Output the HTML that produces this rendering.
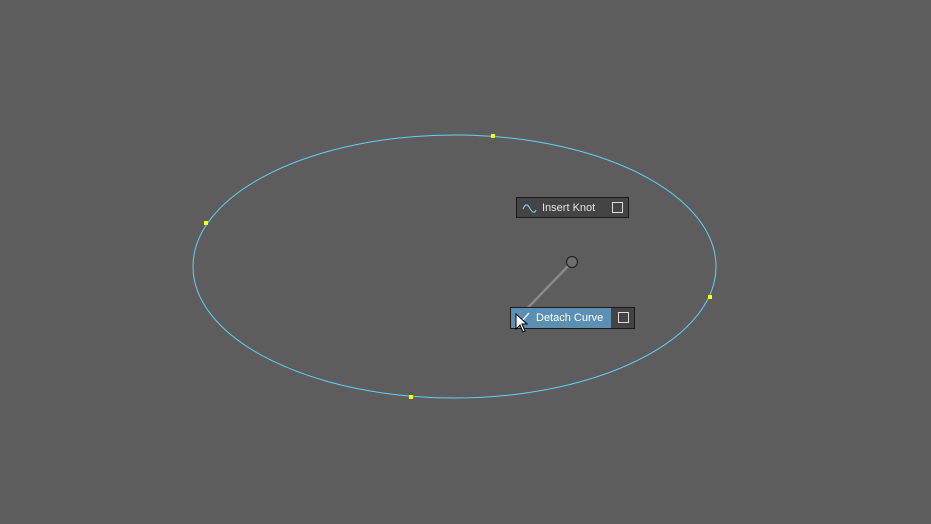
<!DOCTYPE html><html><head><style>
body{margin:0;width:931px;height:524px;background:#5d5d5d;overflow:hidden;position:relative;font-family:"Liberation Sans",sans-serif}
.box{position:absolute;border:1px solid #1a1a1a;background:#444;color:#e6e6e6;font-size:11px;box-sizing:border-box}
.cb{position:absolute;width:9px;height:9px;border:1px solid #ddd}
</style></head><body>
<svg width="931" height="524" style="position:absolute;left:0;top:0">
<ellipse cx="454.5" cy="266.5" rx="261.5" ry="131.5" fill="none" stroke="#5fd3f0" stroke-width="1"/>
<g fill="#ffff00"><rect x="491" y="134" width="4" height="4"/><rect x="204" y="221" width="4" height="4"/><rect x="708" y="295" width="4" height="4"/><rect x="409" y="395" width="4" height="4"/></g>
<line x1="572" y1="262" x2="518" y2="318" stroke="#8a8a8a" stroke-width="2.5"/>
<circle cx="572" cy="262" r="5.5" fill="#6e6e6e" stroke="#1a1a1a" stroke-width="1"/>
</svg>
<div class="box" style="left:516px;top:197px;width:113px;height:21px">
<svg width="18" height="14" style="position:absolute;left:5px;top:3px"><path d="M1 8 Q4 1 7 6 T11 11 M11 11 q2 1 3-2" fill="none" stroke="#7fc7d8" stroke-width="1.2"/></svg>
<span style="position:absolute;left:25px;top:4px">Insert Knot</span><div class="cb" style="left:95px;top:4px"></div></div>
<div class="box" style="left:510px;top:307px;width:125px;height:22px">
<div style="position:absolute;left:0;top:0;width:100px;height:20px;background:#5b8fb3"></div>
<svg width="14" height="14" style="position:absolute;left:6px;top:3px"><path d="M3 12 L12 2" stroke="#eee" stroke-width="1.5"/></svg>
<span style="position:absolute;left:25px;top:4px;color:#fff">Detach Curve</span><div class="cb" style="left:107px;top:4px"></div></div>
<svg width="14" height="20" style="position:absolute;left:515px;top:313px"><path d="M1 1 L1 16 L5 12 L8 19 L10 18 L7 11 L12 11 Z" fill="#fff" stroke="#000" stroke-width="1"/></svg>
</body></html>
